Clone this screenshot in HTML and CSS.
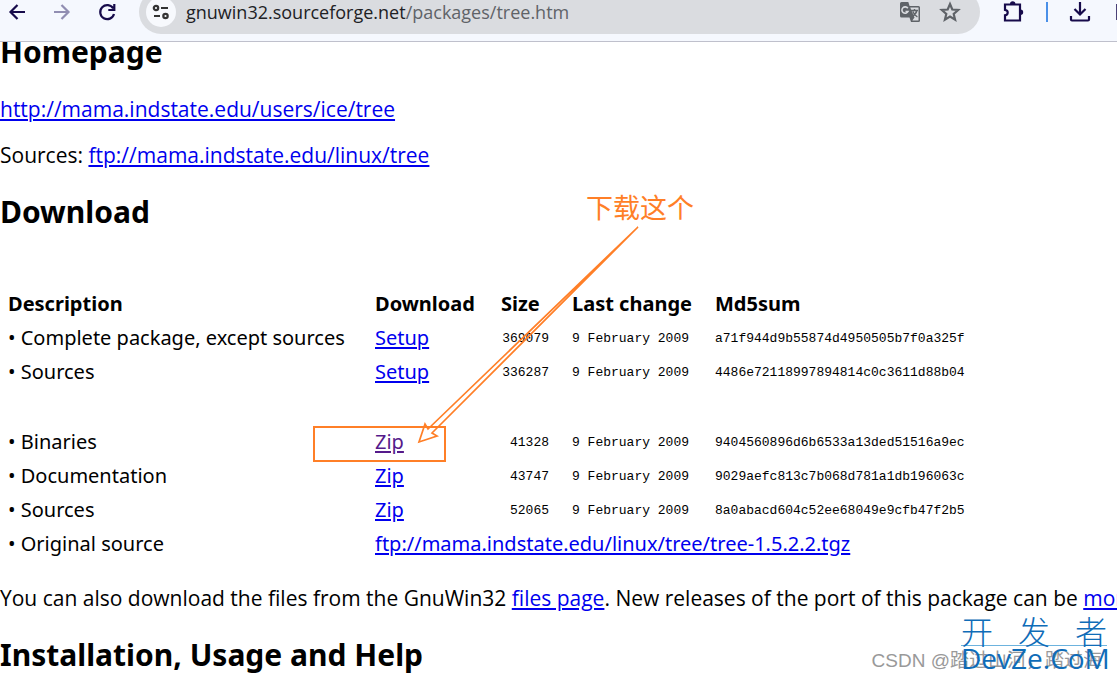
FILE: index.html
```html
<!DOCTYPE html>
<html lang="en">
  <head>
    <meta charset="UTF-8" />
    <meta name="viewport" content="width=device-width, initial-scale=1.0" />
    <title>Tree for Windows</title>
    <link rel="stylesheet" href="styles.css">
  </head>
  <body>
    <header class="toolbar">
      <div class="nav">
        <button type="button" aria-label="Back">
          <svg width="24" height="24" viewBox="0 0 24 24"><path d="M20 12H6M12.500 5L5.500 12l7 7" /></svg>
        </button>
        <button type="button" class="muted" aria-label="Forward">
          <svg width="24" height="24" viewBox="0 0 24 24"><path d="M4 12h14M11.500 5l7 7-7 7" /></svg>
        </button>
        <button type="button" aria-label="Reload">
          <svg width="24" height="24" viewBox="0 0 24 24"><path d="M18.200 8.500A7 7 0 1 0 19 14M19.300 4v6h-6" /></svg>
        </button>
      </div>
      <div class="omnibox">
        <button type="button" class="site-info" aria-label="Site information">
          <svg width="20" height="20" viewBox="0 0 20 20"><circle cx="5" cy="6" r="2.200" /><path d="M10 6h7M3 14h6" /><circle cx="14.500" cy="14" r="2.200" /></svg>
        </button>
        <a class="url" href="#">gnuwin32.sourceforge.net<span>/packages/tree.htm</span></a>
        <button type="button" class="page-action" aria-label="Translate">
          <svg width="22" height="22" viewBox="0 0 22 22">
            <path class="solid" d="M2.500 1h6.800l1.300 4H19.500A1.500 1.500 0 0 1 21 6.500v13a1.500 1.500 0 0 1-1.500 1.500H12l-1.500-4.500h-8A1.500 1.500 0 0 1 1 15V2.500A1.500 1.500 0 0 1 2.500 1z" />
            <path class="sheet" d="M11.200 6.500h8.300v13h-6.200l2.200-3z" />
            <path class="letter" d="M8.800 7.300A3.200 3.200 0 1 0 9 10.500H6.500" />
            <path class="strokes" d="M12 9.500h7M15.500 8v1.500M17.800 9.500c-.5 2.500-2 4.500-4.300 6M13.800 10.500c1 2.500 2.600 4.300 4.600 5.500" />
          </svg>
        </button>
        <button type="button" class="page-action" aria-label="Bookmark this page">
          <svg width="22" height="22" viewBox="0 0 22 22"><path d="M11 3l2.300 5.500 5.900.5-4.500 3.900 1.400 5.800L11 15.600l-5.100 3.100 1.400-5.800L2.800 9l5.900-.5z" /></svg>
        </button>
      </div>
      <div class="actions">
        <button type="button" aria-label="Extensions">
          <svg width="24" height="24" viewBox="0 0 24 24"><path d="M3 4.500h15v16H3v-5.200c3.600-.4 3.600-5.100 0-5.500z" /><path class="fill" d="M8 4a2.700 2.700 0 0 1 5.400 0zM18.500 9.500a2.700 2.700 0 0 1 0 5.400z" /></svg>
        </button>
        <span class="divider"></span>
        <button type="button" aria-label="Downloads">
          <svg width="24" height="24" viewBox="0 0 24 24"><path d="M12 2v12M6.500 9l5.500 5.500L17.500 9M3 16v3.500a1 1 0 0 0 1 1h16a1 1 0 0 0 1-1V16" /></svg>
        </button>
        <span class="edge"></span>
      </div>
    </header>

    <main class="page">
      <h2>Homepage</h2>
      <p><a href="#">http://mama.indstate.edu/users/ice/tree</a></p>
      <p>Sources: <a href="#">ftp://mama.indstate.edu/linux/tree</a></p>

      <h2>Download</h2>
      <table class="files">
        <colgroup>
          <col class="col-description" />
          <col class="col-download" />
          <col class="col-size" />
          <col class="col-date" />
          <col />
        </colgroup>
        <thead>
          <tr>
            <th>Description</th>
            <th>Download</th>
            <th>Size</th>
            <th>Last change</th>
            <th>Md5sum</th>
          </tr>
        </thead>
        <tbody>
          <tr>
            <td>• Complete package, except sources</td>
            <td><a href="#">Setup</a></td>
            <td class="mono size">369079</td>
            <td class="mono">9 February 2009</td>
            <td class="mono">a71f944d9b55874d4950505b7f0a325f</td>
          </tr>
          <tr>
            <td>• Sources</td>
            <td><a href="#">Setup</a></td>
            <td class="mono size">336287</td>
            <td class="mono">9 February 2009</td>
            <td class="mono">4486e72118997894814c0c3611d88b04</td>
          </tr>
          <tr class="spacer">
            <td colspan="5"></td>
          </tr>
          <tr>
            <td>• Binaries</td>
            <td><a class="visited" href="#">Zip</a></td>
            <td class="mono size">41328</td>
            <td class="mono">9 February 2009</td>
            <td class="mono">9404560896d6b6533a13ded51516a9ec</td>
          </tr>
          <tr>
            <td>• Documentation</td>
            <td><a href="#">Zip</a></td>
            <td class="mono size">43747</td>
            <td class="mono">9 February 2009</td>
            <td class="mono">9029aefc813c7b068d781a1db196063c</td>
          </tr>
          <tr>
            <td>• Sources</td>
            <td><a href="#">Zip</a></td>
            <td class="mono size">52065</td>
            <td class="mono">9 February 2009</td>
            <td class="mono">8a0abacd604c52ee68049e9cfb47f2b5</td>
          </tr>
          <tr>
            <td>• Original source</td>
            <td colspan="4"><a href="#">ftp://mama.indstate.edu/linux/tree/tree-1.5.2.2.tgz</a></td>
          </tr>
        </tbody>
      </table>

      <p>You can also download the files from the GnuWin32 <a href="#">files page</a>. New releases of the port of this package can be <a href="#">monitored</a>.</p>

      <h2>Installation, Usage and Help</h2>
    </main>

    <!-- Notes drawn over the page -->
    <div class="note-box"></div>
    <svg class="note-arrow" width="222" height="220" viewBox="0 0 222 220">
      <path d="M221 3L11 205 8 200 2 218 20 212 15 209z" />
    </svg>
    <div class="note-text" lang="zh-CN">下载这个</div>

    <div class="credit" lang="zh-CN">CSDN @踏过山河，踏过海</div>
    <div class="brand" lang="zh-CN">
      <div class="brand-top"><span>开</span><span>发</span><span>者</span></div>
      <div class="brand-name">DevZe.CoM</div>
    </div>
  </body>
</html>
```
FILE: styles.css
```css
* {
  box-sizing: border-box;
}

body {
  margin: 0;
  height: 100vh;
  position: relative;
  overflow: hidden;
  background-color: #fff;
  color: #000;
  font-family: "Noto Sans", "Open Sans", "Noto Sans CJK SC", sans-serif;
  font-size: 20px;
  line-height: 28px;
}

/* Browser toolbar, cut off by the top of the window */
.toolbar {
  position: relative;
  z-index: 1;
  display: flex;
  align-items: flex-end;
  height: 42px;
  padding-bottom: 7px;
  overflow: hidden;
  background-color: #f5f8fe;
  border-bottom: 1px solid #bfc0cc;
}

.toolbar button {
  display: flex;
  flex: none;
  padding: 0;
  border: 0;
  background: none;
  color: #170b4b;
}

.toolbar svg {
  fill: none;
  stroke: currentColor;
  stroke-width: 2.2;
}

.nav,
.actions {
  display: flex;
  align-items: center;
  height: 44px;
}

.nav {
  gap: 21px;
  padding: 0 20px 0 5px;
}

.toolbar .muted {
  color: #918eb2;
}

.omnibox {
  display: flex;
  flex: 1;
  align-items: center;
  gap: 18px;
  height: 44px;
  padding: 0 19px 0 7px;
  border-radius: 22px;
  background-color: #dadce0;
}

.toolbar .site-info {
  align-items: center;
  justify-content: center;
  width: 30px;
  height: 30px;
  margin-right: -8px;
  border-radius: 50%;
  background-color: #f7f9fd;
  color: #333;
}

.url {
  flex: 1;
  color: #202124;
  font-family: "Open Sans", sans-serif;
  font-size: 18px;
  text-decoration: none;
  white-space: nowrap;
}

.url span {
  color: #5f6368;
}

.toolbar .page-action {
  color: #5f6368;
}

.toolbar .solid,
.toolbar .fill {
  fill: currentColor;
  stroke: none;
}

.toolbar .sheet {
  fill: #dadce0;
  stroke: none;
}

.toolbar .letter {
  stroke: #dadce0;
  stroke-width: 1.600;
}

.toolbar .strokes {
  stroke-width: 1.400;
}

.actions {
  gap: 21px;
  padding-left: 22px;
}

.divider {
  width: 2px;
  height: 20px;
  margin: 0 -1px;
  background-color: #4a90e8;
}

.edge {
  width: 1px;
  height: 16px;
  margin-left: 3px;
  background-color: #4b4278;
}

/* Page content, scrolled so that its first heading meets the toolbar */
.page {
  margin-top: -33px;
}

h2 {
  margin: 21px 0;
  font-size: 30px;
  line-height: 44px;
}

p {
  margin: 18px 0;
  font-family: "Open Sans", "Noto Sans", sans-serif;
  font-size: 21px;
  white-space: nowrap;
}

a {
  color: #0000ee;
  text-underline-offset: 2px;
}

.visited {
  color: #551a8b;
}

.files {
  width: 100%;
  margin: 52px 0 23px;
  border-collapse: collapse;
  table-layout: fixed;
}

.files th,
.files td {
  height: 34px;
  padding: 0 0 0 8px;
  text-align: left;
  white-space: nowrap;
}

.files th {
  height: 35px;
}

.files .spacer td {
  height: 36px;
}

.col-description {
  width: 367px;
}

.col-download {
  width: 126px;
}

.col-size {
  width: 71px;
}

.col-date {
  width: 143px;
}

.files .mono {
  padding-top: 2px;
  font-family: "Liberation Mono", monospace;
  font-size: 13px;
}

.files .size {
  padding-right: 15px;
  text-align: right;
}

.note-box {
  position: absolute;
  top: 426px;
  left: 313px;
  width: 133px;
  height: 36px;
  border: 2px solid #ff7f27;
}

.note-arrow {
  position: absolute;
  top: 224px;
  left: 417px;
  fill: none;
  stroke: #ff7f27;
  stroke-width: 1.700;
}

.note-text {
  position: absolute;
  top: 188px;
  left: 586px;
  color: #ff7f27;
  font-family: "Noto Sans CJK SC", sans-serif;
  font-size: 27px;
  line-height: 38px;
}

.credit {
  position: absolute;
  right: 15px;
  bottom: 5px;
  color: #999;
  font-family: "Liberation Sans", "Noto Sans CJK SC", sans-serif;
  font-size: 19px;
}

.brand {
  position: absolute;
  right: 10px;
  bottom: 10px;
  width: 146px;
  color: #0f6cb8;
}

.brand-top {
  display: flex;
  justify-content: space-between;
  border-bottom: 1px solid #6db3de;
  font-family: "Noto Sans CJK SC", sans-serif;
  font-size: 32px;
  font-weight: 300;
  line-height: 30px;
}

.brand-name {
  font-family: "Open Sans", sans-serif;
  font-size: 28px;
  line-height: 24px;
  text-align: center;
}
```
